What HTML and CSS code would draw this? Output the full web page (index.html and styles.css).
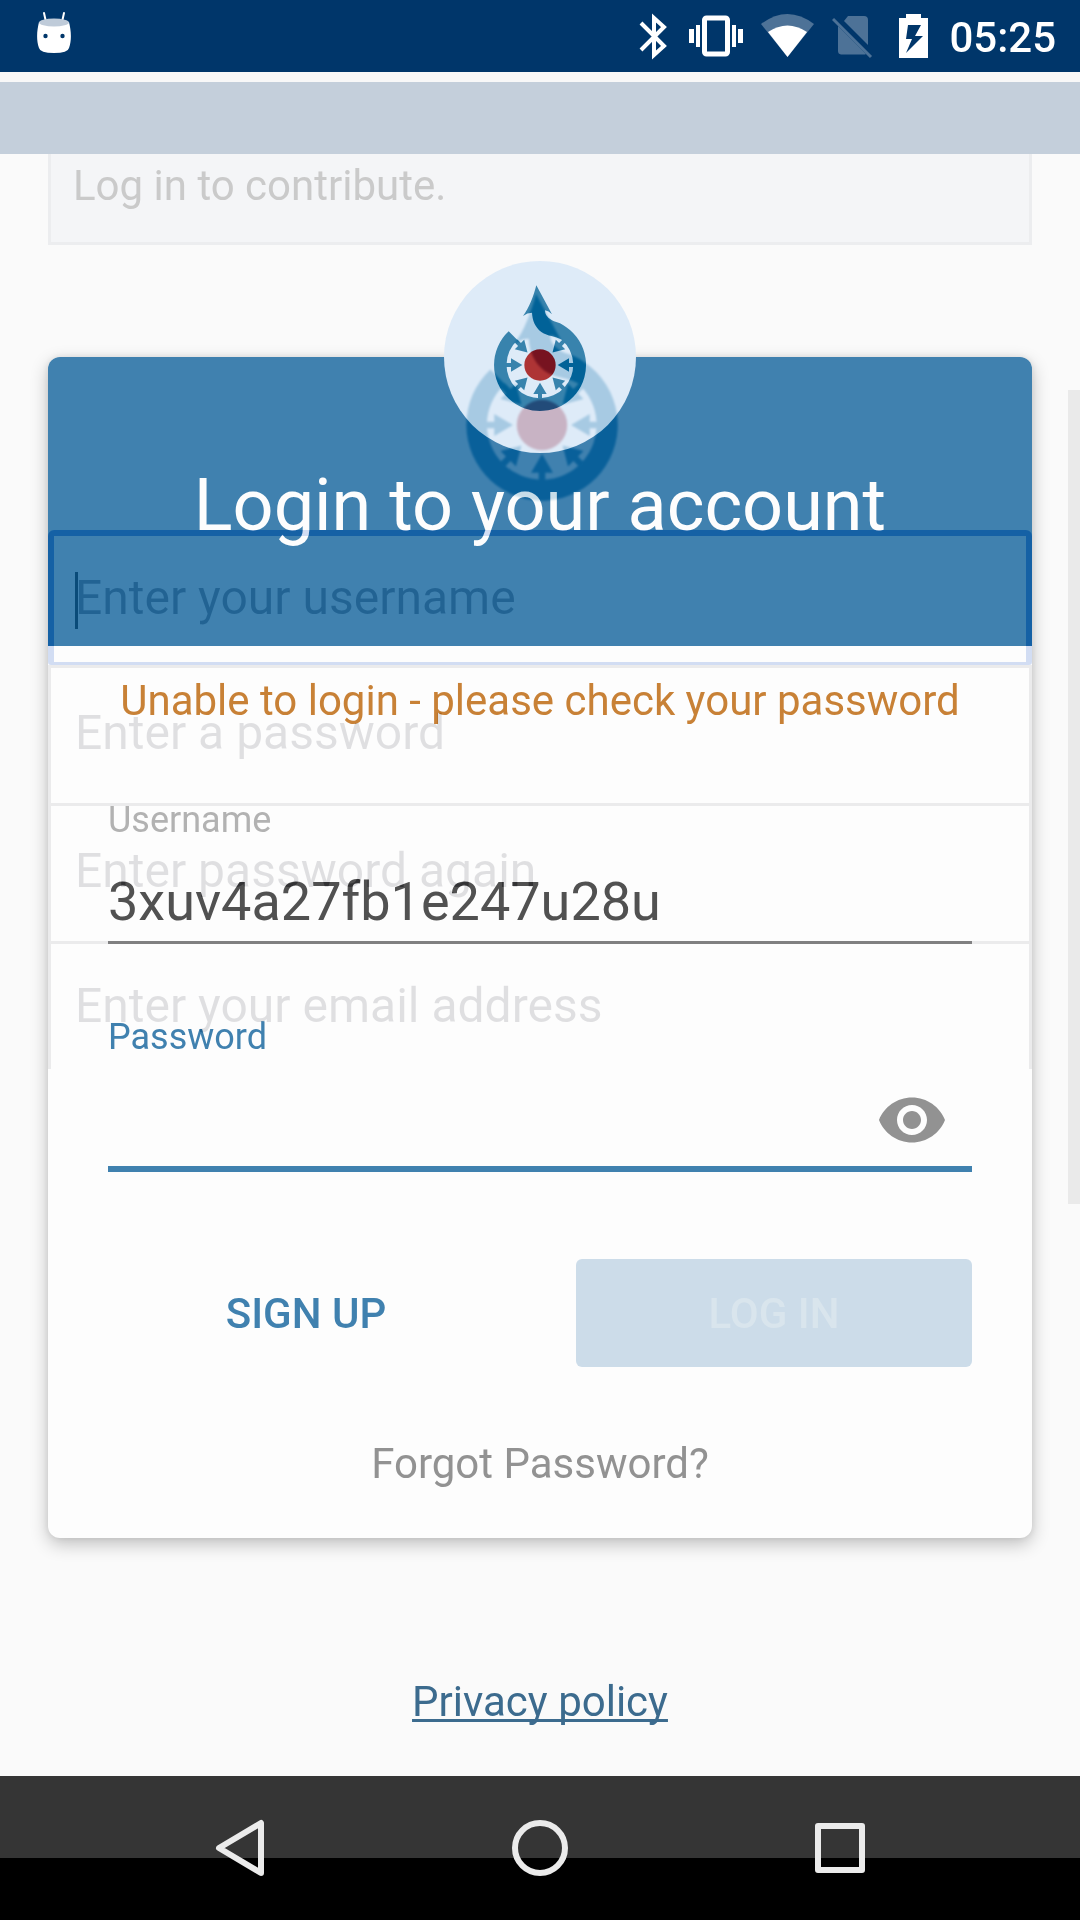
FILE: index.html
```html
<!DOCTYPE html>
<html lang="en">
<head>
<meta charset="utf-8">
<meta name="viewport" content="width=device-width, initial-scale=1">
<title>Login</title>
<link rel="stylesheet" href="styles.css">
</head>
<body>
<svg width="0" height="0" class="defs" aria-hidden="true">
  <defs>
    <path id="spoke" d="M-102-6H-87V-20L-53 0L-87 20V6H-102Z"/>
    <g id="mark">
      <path d="M-94-101A138 138 0 1 0 78-114C66-123 54-128 42-131C25-139 15-149 15-164Q26-162 36-152L-11-239C-20-205-32-172-51-147Q-38-157-24-157C-23-134-15-114 4-99C24-85 45-88 65-76A100 100 0 1 1-68-74L-56-63Z"/>
      <use href="#spoke"/>
      <use href="#spoke" transform="rotate(45)"/>
      <use href="#spoke" transform="rotate(135)"/>
      <use href="#spoke" transform="rotate(180)"/>
      <use href="#spoke" transform="rotate(225)"/>
      <use href="#spoke" transform="rotate(270)"/>
      <use href="#spoke" transform="rotate(315)"/>
    </g>
  </defs>
</svg>

<header class="status-bar">
  <svg class="app-icon" width="34" height="72" viewBox="0 0 34 72" aria-hidden="true">
    <path d="M7 13L9 22M27 13L25 22" stroke="#fff" stroke-width="2" stroke-linecap="round"/>
    <path d="M2 22C0 30-1 40 2 48Q3 53 17 53Q31 53 32 48C35 40 34 30 32 22Z" fill="#fff"/>
    <ellipse cx="17" cy="22.500" rx="15" ry="4" fill="#bfcbd9"/>
    <circle cx="8.500" cy="36" r="2.200" fill="#00366a"/><circle cx="25.500" cy="36" r="2.200" fill="#00366a"/>
  </svg>
  <div class="status-icons">
    <svg width="33" height="72" viewBox="0 0 33 72" aria-hidden="true">
      <path d="M3 23L26 46L16 55V18L26 27L3 50" fill="none" stroke="#fff" stroke-width="4"/>
    </svg>
    <svg width="54" height="72" viewBox="0 0 54 72" fill="#fff" aria-hidden="true">
      <rect x="15.500" y="18" width="23" height="36" rx="2" fill="none" stroke="#fff" stroke-width="5"/>
      <path d="M0 29h5v14H0zM7 25h4v22H7zM43 25h4v22h-4zM49 29h5v14h-5z"/>
    </svg>
    <svg width="53" height="72" viewBox="0 0 53 72" aria-hidden="true">
      <path d="M0 24Q26.500 4 53 24L26.500 57Z" fill="#4d7297"/>
      <path d="M7 32Q26.500 19 46 32L26.500 57Z" fill="#fff"/>
    </svg>
    <svg width="49" height="72" viewBox="0 0 49 72" aria-hidden="true">
      <path d="M12 21L16 16H32Q36 16 36 20V45ZM6 26L34 54Q33 54.500 32 54.500H9Q6 54 6 51Z" fill="#4d7297"/>
      <path d="M1 19L39 57" stroke="#4d7297" stroke-width="3"/>
    </svg>
    <svg width="32" height="72" viewBox="0 0 32 72" aria-hidden="true">
      <path fill-rule="evenodd" fill="#fff" d="M0 18H7V14H22V18H29V58H0ZM9 25L7 39H13L7 53L24 36H16L22 25Z"/>
    </svg>
    <time class="clock">05:25</time>
  </div>
</header>

<main class="screen">
  <div class="toolbar"></div>
  <p class="notice">Log in to contribute.</p>

  <section class="card">
    <header class="card-header">
      <h1 class="title">Login to your account</h1>
    </header>
    <div class="badge">
      <svg width="96" height="130" viewBox="-144 -246 288 390" aria-hidden="true">
        <use href="#mark" fill="#3883ad"/>
        <circle r="47" fill="#ae3435"/>
      </svg>
    </div>
    <form class="form">
      <p class="error" role="alert">Unable to login - please check your password</p>
      <div class="field">
        <label class="label" for="username">Username</label>
        <input class="input" id="username" type="text" value="3xuv4a27fb1e247u28u" autocomplete="off" spellcheck="false">
      </div>
      <div class="field field-active">
        <label class="label" for="password">Password</label>
        <div class="password-row">
          <input class="input" id="password" type="password">
          <button class="reveal" type="button" aria-label="Show password">
            <svg width="72" height="72" viewBox="0 0 24 24" fill="#929292"><path d="M12 4.500C7 4.500 2.730 7.610 1 12c1.730 4.390 6 7.500 11 7.500s9.270-3.110 11-7.500c-1.730-4.390-6-7.500-11-7.500zM12 17c-2.760 0-5-2.240-5-5s2.240-5 5-5 5 2.240 5 5-2.240 5-5 5zm0-8c-1.660 0-3 1.340-3 3s1.340 3 3 3 3-1.340 3-3-1.340-3-3-3z"/></svg>
          </button>
        </div>
      </div>
      <div class="actions">
        <button class="button" type="button">SIGN UP</button>
        <button class="button button-filled" type="submit" disabled>LOG IN</button>
      </div>
      <a class="forgot" href="#forgot">Forgot Password?</a>
    </form>

    <!-- outgoing sign-up page, still fading over the card -->
    <svg class="fading fading-logo" width="158" height="214" viewBox="-144 -246 288 390" aria-hidden="true">
      <use href="#mark" fill="#372115"/>
      <circle r="46" fill="#163834"/>
    </svg>
    <div class="fading fading-form">
      <input class="old-input old-focus" type="text" placeholder="Enter your username" aria-label="New username">
      <input class="old-input" type="password" placeholder="Enter a password" aria-label="New password">
      <input class="old-input" type="password" placeholder="Enter password again" aria-label="Repeat new password">
      <input class="old-input old-last" type="email" placeholder="Enter your email address" aria-label="Email address">
      <span class="caret"></span>
    </div>
  </section>

  <a class="privacy" href="#privacy">Privacy policy</a>
  <div class="scroll-thumb"></div>
</main>

<nav class="nav-bar">
  <button class="nav-button" type="button" aria-label="Back">
    <svg width="72" height="72" viewBox="0 0 72 72"><path d="M57 11V61L15 36Z" /></svg>
  </button>
  <button class="nav-button" type="button" aria-label="Home">
    <svg width="72" height="72" viewBox="0 0 72 72"><circle cx="36" cy="36" r="25"/></svg>
  </button>
  <button class="nav-button" type="button" aria-label="Recent apps">
    <svg width="72" height="72" viewBox="0 0 72 72"><rect x="14" y="14" width="44" height="44"/></svg>
  </button>
</nav>
</body>
</html>
```
FILE: styles.css
```css
* {
  box-sizing: border-box;
}

body {
  margin: 0;
  min-height: 100vh;
  display: flex;
  flex-direction: column;
  background: #fafafa;
  font-family: Roboto, "Noto Sans", sans-serif;
  font-size: 42px;
  line-height: 48px;
}

h1,
p {
  margin: 0;
}

button,
input {
  margin: 0;
  padding: 0;
  border: 0;
  outline: 0;
  border-radius: 0;
  background: transparent;
  font-family: inherit;
}

svg {
  display: block;
}

.defs {
  position: absolute;
}

.status-bar {
  display: flex;
  justify-content: space-between;
  height: 72px;
  padding: 0 24px 0 37px;
  background: #00366a;
}

.status-icons {
  display: flex;
  gap: 18px;
}

.clock {
  padding-top: 14px;
  color: #fff;
  font-weight: 500;
}

.screen {
  position: relative;
  flex: 1;
  display: flex;
  flex-direction: column;
}

.toolbar {
  height: 82px;
  border-top: 10px solid #f8f8f8;
  background: #c4cfdb;
}

.notice {
  height: 91px;
  margin: 0 48px;
  padding: 8px 22px;
  border: 3px solid #ecedef;
  border-top: 0;
  background: #f4f5f7;
  color: #cacaca;
}

.card {
  position: relative;
  margin: 112px 48px 140px;
  border-radius: 12px;
  background: #fdfdfd;
  box-shadow: 0 6px 18px rgba(0, 0, 0, 0.24), 0 0 6px rgba(0, 0, 0, 0.08);
}

.card-header {
  padding: 107px 24px 98px;
  border-radius: 12px 12px 0 0;
  background: #4081af;
}

.title {
  color: #fdfdfd;
  font-size: 72px;
  font-weight: 400;
  line-height: 84px;
  text-align: center;
}

.badge {
  position: absolute;
  top: -96px;
  left: calc(50% - 96px);
  display: flex;
  justify-content: center;
  width: 192px;
  height: 192px;
  padding-top: 22px;
  border-radius: 50%;
  background: #deebf8;
}

.form {
  display: flex;
  flex-direction: column;
  padding: 31px 60px 50px;
}

.error {
  color: #c88136;
  text-align: center;
}

.field {
  display: flex;
  flex-direction: column;
  margin-top: 74px;
}

.field-active {
  margin-top: 72px;
}

.label {
  color: #b2b2b2;
  font-size: 36px;
  line-height: 42px;
}

.input {
  width: 100%;
  height: 103px;
  padding-top: 21px;
  border-bottom: 3px solid #929292;
  color: #515151;
  font-size: 54px;
}

.field-active .label {
  color: #4081af;
}

.password-row {
  display: flex;
  align-items: center;
  height: 114px;
  padding-right: 24px;
  border-bottom: 6px solid #4081af;
}

.password-row .input {
  flex: 1;
  height: 100%;
  border-bottom: 0;
}

.reveal {
  margin-top: 16px;
}

.actions {
  display: flex;
  gap: 72px;
  margin-top: 87px;
}

.button {
  flex: 1;
  height: 108px;
  border-radius: 6px;
  color: #4081af;
  font-size: 42px;
  font-weight: 500;
}

.button-filled {
  background: #ccdce9;
  color: #d9e5ed;
}

.forgot {
  align-self: center;
  margin-top: 73px;
  color: #929292;
  text-decoration: none;
}

/* each colour here is taken away from whatever lies below it */
.fading {
  position: absolute;
  mix-blend-mode: difference;
  pointer-events: none;
}

.fading-logo {
  top: -67px;
  left: calc(50% - 77px);
  filter: blur(1px);
}

.fading-form {
  top: 173px;
  left: 0;
  right: 0;
  height: 539px;
  overflow: hidden;
  display: flex;
  flex-direction: column;
}

.old-input {
  flex: none;
  height: 138px;
  padding: 0 24px 6px;
  border: 3px solid #121211;
  border-bottom: 0;
  font-size: 48px;
}

.old-input::placeholder {
  color: #1e1e1c;
  opacity: 1;
}

.old-focus {
  height: 135px;
  padding: 0 21px 4px;
  border: 6px solid #2b200a;
  border-bottom-width: 3px;
  border-radius: 6px 6px 3px 3px;
}

.old-last {
  height: 132px;
}

.caret {
  position: absolute;
  top: 42px;
  left: 27px;
  width: 3px;
  height: 57px;
  background: #363636;
}

.privacy {
  align-self: center;
  margin-bottom: 50px;
  color: #3c6b8e;
  text-decoration-thickness: 3px;
  text-decoration-skip-ink: none;
  text-underline-offset: 3px;
}

.scroll-thumb {
  position: absolute;
  top: 318px;
  right: 0;
  width: 12px;
  height: 814px;
  background: #eaeaea;
}

.nav-bar {
  display: flex;
  justify-content: center;
  gap: 228px;
  height: 144px;
  background: linear-gradient(#353535 82px, #000 82px);
}

.nav-button svg {
  fill: none;
  stroke: #ebebeb;
  stroke-width: 6px;
  stroke-linejoin: round;
}
```
